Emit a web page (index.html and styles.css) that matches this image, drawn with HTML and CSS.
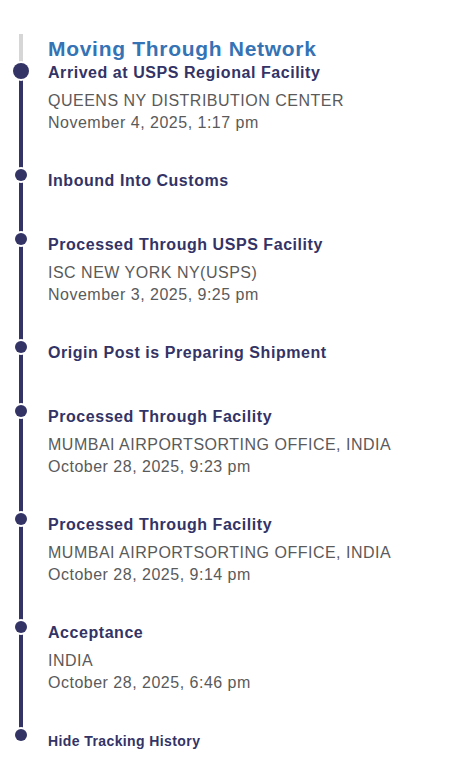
FILE: index.html
```html
<!DOCTYPE html>
<html>
<head>
<meta charset="utf-8">
<link rel="stylesheet" href="styles.css">
</head>
<body>
<div class="timeline">
  <div class="heading">Moving Through Network</div>
  <div class="item item-current">
    <div class="title">Arrived at USPS Regional Facility</div>
    <div class="detail">QUEENS NY DISTRIBUTION CENTER</div>
    <div class="detail">November 4, 2025, 1:17 pm</div>
  </div>
  <div class="item">
    <div class="title">Inbound Into Customs</div>
  </div>
  <div class="item">
    <div class="title">Processed Through USPS Facility</div>
    <div class="detail">ISC NEW YORK NY(USPS)</div>
    <div class="detail">November 3, 2025, 9:25 pm</div>
  </div>
  <div class="item">
    <div class="title">Origin Post is Preparing Shipment</div>
  </div>
  <div class="item">
    <div class="title">Processed Through Facility</div>
    <div class="detail">MUMBAI AIRPORTSORTING OFFICE, INDIA</div>
    <div class="detail">October 28, 2025, 9:23 pm</div>
  </div>
  <div class="item">
    <div class="title">Processed Through Facility</div>
    <div class="detail">MUMBAI AIRPORTSORTING OFFICE, INDIA</div>
    <div class="detail">October 28, 2025, 9:14 pm</div>
  </div>
  <div class="item">
    <div class="title">Acceptance</div>
    <div class="detail">INDIA</div>
    <div class="detail">October 28, 2025, 6:46 pm</div>
  </div>
  <div class="item item-last">
    <a class="toggle" href="#">Hide Tracking History</a>
  </div>
</div>
</body>
</html>
```
FILE: styles.css
```css
html, body {
  margin: 0;
  padding: 0;
  background: #ffffff;
}
body {
  font-family: "Liberation Sans", Arial, Helvetica, sans-serif;
  width: 464px;
  height: 769px;
  overflow: hidden;
}
.timeline {
  padding-top: 35px;
  display: flex;
  flex-direction: column;
}
.heading {
  position: relative;
  padding-left: 48px;
  font-size: 21px;
  letter-spacing: 0.7px;
  font-weight: bold;
  line-height: 27px;
  color: #3573b5;
  margin-bottom: 0;
}
.heading::before {
  content: "";
  position: absolute;
  left: 19px;
  top: -1px;
  bottom: 0;
  width: 4px;
  background: #d6d6d6;
}
.item {
  position: relative;
  padding-left: 48px;
  padding-bottom: 36px;
}
.item::before {
  content: "";
  position: absolute;
  left: 19px;
  top: 0;
  bottom: 0;
  width: 4px;
  background: #333366;
}
.item::after {
  content: "";
  position: absolute;
  left: 15px;
  top: -1px;
  width: 12px;
  height: 12px;
  border-radius: 50%;
  background: #333366;
  box-shadow: 0 0 0 2px #ffffff;
}
.item-current::after {
  left: 13px;
  top: 1px;
  width: 16px;
  height: 16px;
}
.item-last {
  padding-bottom: 0;
}
.item-last::before {
  display: none;
}
.title {
  font-size: 16px;
  letter-spacing: 0.55px;
  font-weight: bold;
  line-height: 22px;
  color: #333366;
  margin-bottom: 6px;
}
.detail {
  font-size: 16px;
  letter-spacing: 0.5px;
  line-height: 22px;
  color: #5a5a5a;
}
.toggle {
  display: block;
  font-size: 14px;
  letter-spacing: 0.4px;
  font-weight: bold;
  line-height: 22px;
  color: #333366;
  text-decoration: none;
}
```
